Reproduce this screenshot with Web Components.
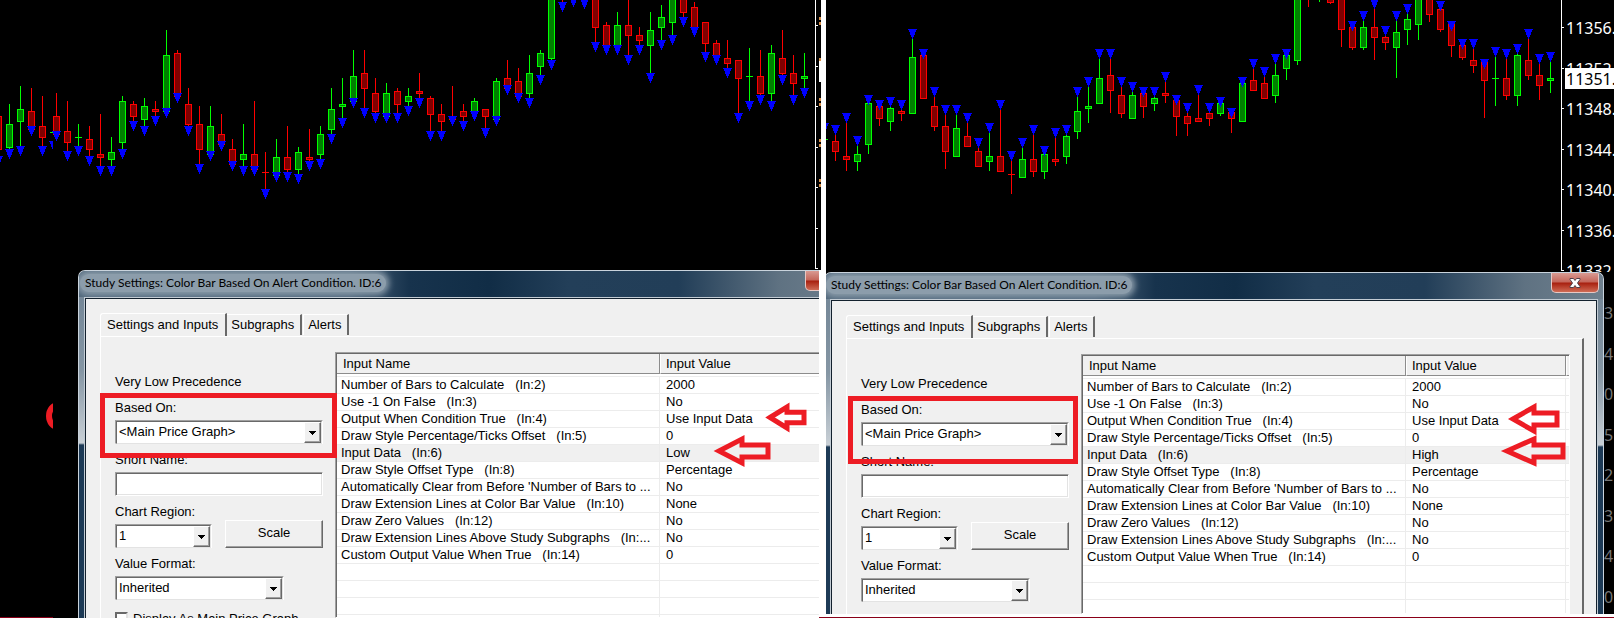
<!DOCTYPE html>
<html lang="en">
<head>
<meta charset="utf-8">
<title>Study Settings comparison</title>
<style>
  html, body { margin: 0; height: 100%; overflow: hidden; background: #fff; }
  body { font: 13px/20px "Liberation Sans", Arial, sans-serif; color: #000; }
</style>
</head>
<body>
<study-compare></study-compare>

<script>
const RED = "#ff0000", GREEN = "#00ff00";

/* One row per bar: x, colour, wick top, body top, body bottom, wick end. */
const LOW_BARS = `
-2 r 116 116 150 156|9 g 104 124 148 149|20 g 86 109 122 146|31 r 88 111 130 126|42 r 96 126 138 146
56 r 93 116 135 131|67 r 101 131 143 151|78 g 124 137 138 146|89 r 126 139 150 156|100 r 114 154 158 166
111 g 137 152 160 166|122 g 96 101 143 149|133 r 101 104 117 121|144 g 98 106 120 126|155 r 101 109 112 116
166 g 30 55 112 108|177 r 50 53 97 93|188 r 88 104 125 126|199 r 106 124 150 164|210 g 106 126 155 151
221 r 114 134 145 141|232 r 139 149 165 161|243 g 124 154 160 166|254 r 101 154 170 166|265 r 152 172 173 189
276 g 139 157 176 172|287 r 126 157 170 172|298 g 147 152 170 174|309 r 129 157 160 161|320 g 126 134 155 159
331 g 88 109 130 134|342 g 78 104 107 118|353 g 50 76 102 98|364 r 50 73 89 108|375 r 78 93 112 113
386 g 83 93 117 113|397 r 88 91 105 113|408 g 88 96 102 106|419 r 73 91 94 98|430 r 96 98 115 131
441 r 104 114 122 131|452 r 86 116 120 116|463 r 104 111 117 121|474 g 98 101 113 111|485 r 109 109 117 128
496 g 78 81 120 116|507 r 60 78 89 85|518 r 68 81 97 93|529 g 55 73 94 98|540 g 50 53 67 75
551 g -10 -10 59 60|562 r -10 -10 -5 2|573 g -30 -30 -20 -3|584 g -30 -30 -20 -1|595 r -10 -10 28 42
606 r 22 25 47 45|617 g 12 25 46 45|628 r -5 25 36 55|639 r 27 35 41 45|650 g 12 30 46 73
661 g 5 17 28 40|672 g -10 -10 23 35|683 r -10 -10 13 17|694 r 2 7 29 27|705 r 22 22 44 52
716 r 40 43 57 55|727 r 40 58 64 68|738 r 60 60 79 113|749 g 48 76 77 101|760 r 50 76 94 95
771 g 45 53 94 101|782 r 30 58 74 75|793 r 55 73 84 95|804 g 53 76 79 88`;

/* Same layout, the third number being the marker's top edge. */
const HIGH_BARS = `
-2 g 123 139 140 140|9 r 125 141 152 161|20 r 113 156 160 171|31 g 136 154 162 171|42 g 95 103 145 154
53 r 100 106 119 126|64 g 97 108 122 131|75 r 100 111 114 121|86 g 29 57 114 114|97 r 49 55 99 99
108 r 87 106 127 131|119 r 105 126 152 169|130 g 105 128 157 157|141 r 113 136 147 147|152 r 138 151 167 167
163 g 123 156 162 171|174 r 100 156 172 172|185 r 151 174 175 194|196 g 138 159 178 178|207 r 125 159 172 177
218 g 146 154 172 179|229 r 128 159 162 166|240 g 125 136 157 164|251 g 87 111 132 139|262 g 77 106 109 123
273 g 49 78 104 104|284 r 49 75 91 113|295 r 77 95 114 118|306 g 82 95 119 119|317 r 87 93 107 118
328 g 87 98 104 111|339 r 72 93 96 103|350 r 95 100 117 136|361 r 103 116 124 136|372 r 85 118 122 122
383 r 103 113 119 126|394 g 97 103 114 116|405 r 108 112 119 133|416 g 77 83 122 122|427 r 59 80 91 91
438 r 67 83 99 99|449 g 54 75 96 103|460 g 49 55 69 80|471 g -20 -10 61 65|482 r -20 -10 -5 7
493 g -20 -10 -5 2|504 r -20 -10 3 4|515 r -20 -10 30 47|526 r 21 27 48 50|537 g 11 27 48 50
548 r -1 27 38 60|559 r 26 37 43 50|570 g 11 32 48 78|581 g 4 19 30 45|592 g -20 -10 25 40
603 r -20 -10 15 22|614 r 1 9 30 32|625 r 21 24 46 57|636 r 39 45 58 60|647 r 39 60 66 73
658 r 59 62 81 118|669 g 47 78 79 106|680 r 49 78 96 100|691 g 44 55 96 106|702 r 29 60 76 80
713 r 54 75 86 100|724 g 52 78 81 93`;

const INPUTS = [
  ["Number of Bars to Calculate   (In:2)", "2000"],
  ["Use -1 On False   (In:3)", "No"],
  ["Output When Condition True   (In:4)", "Use Input Data"],
  ["Draw Style Percentage/Ticks Offset   (In:5)", "0"],
  ["Input Data   (In:6)", ""],
  ["Draw Style Offset Type   (In:8)", "Percentage"],
  ["Automatically Clear from Before 'Number of Bars to ...", "No"],
  ["Draw Extension Lines at Color Bar Value   (In:10)", "None"],
  ["Draw Zero Values   (In:12)", "No"],
  ["Draw Extension Lines Above Study Subgraphs   (In:...", "No"],
  ["Custom Output Value When True   (In:14)", "0"],
];

function define(name, render) {
  customElements.define(name, class extends HTMLElement {
    connectedCallback() {
      if (this.shadowRoot) return;
      this.attachShadow({ mode: "open" }).innerHTML = render(this);
    }
  });
}

const marker = (x, y) =>
  `<path fill="#0000ff" d="M${x - 4} ${y}h9v1h-1v2h-1v3h-1v2h-1v2h-1v-2h-1v-2h-1v-3h-1v-2h-1z"/>`;

function bar(row, mode) {
  const [xs, c, ...n] = row.trim().split(" ");
  const x = +xs, [a, top, bottom, end] = n.map(Number);
  const line = c === "r" ? RED : GREEN, fill = c === "r" ? "#800000" : "#008000";
  const from = mode === "high" ? a + 4 : a;
  const body = bottom - top < 2
    ? `<rect x="${x - 3}" y="${top}" width="7" height="1" fill="${line}"/>`
    : `<rect x="${x - 3}" y="${top}" width="7" height="${bottom - top}" fill="${line}"/>
       <rect x="${x - 2}" y="${top + 1}" width="5" height="${bottom - top - 2}" fill="${fill}"/>`;
  return `<rect x="${x}" y="${from}" width="1" height="${Math.max(0, end - from)}" fill="${line}"/>${body}`
    + marker(x, mode === "high" ? a : end);
}

define("price-bars", el => {
  const mode = el.getAttribute("mode");
  const rows = (mode === "high" ? HIGH_BARS : LOW_BARS).trim().split(/[|\n]/);
  const seam = mode === "low"
    ? `<rect x="50" y="132" width="3" height="1" fill="${GREEN}"/><path fill="#0000ff" d="M49 141h4v8h-1v-2h-1v-3h-1v-2h-1z"/>` : "";
  return `<style>
      :host { display: block; flex: 1; min-width: 0; }
      svg { display: block; width: 100%; height: 100%; }
    </style>
    <svg shape-rendering="crispEdges" aria-label="Price bars with ${mode} markers">${rows.map(r => bar(r, mode)).join("")}${seam}</svg>`;
});

define("price-axis", el => {
  const first = +el.getAttribute("first");
  const labels = (el.getAttribute("labels") || "").split(" ").filter(Boolean);
  const ticks = [0, 41, 81, 122, 162, 203, 243, 284].map(v => v + first);
  const plain = el.hasAttribute("plain");
  const x = plain ? 0 : 5;
  const price = el.getAttribute("price");
  return `<style>
      :host { display: block; overflow: hidden; }
      svg { display: block; width: 100%; height: 100%; }
      text { font: 16px "Noto Sans", sans-serif; }
    </style>
    <svg>
      ${plain ? "" : `<rect width="1" height="${first + 243}" fill="#fff"/>` + ticks.slice(0, 7).map(y => `<rect y="${y}" width="3" height="1" fill="#fff"/>`).join("")}
      ${labels.map((t, i) => `<text x="${x}" y="${ticks[i] + 7}" fill="${plain ? "#777" : "#fff"}">${t}</text>`).join("")}
      ${price ? `<rect x="4" y="68" width="60" height="21" fill="#fff"/><text x="5" y="85" fill="#000">${price}</text>` : ""}
      ${!plain && !labels.length ? ticks.slice(0, 5).map(y => `<path fill="#d8904a" d="M4 ${y - 8}h2v3h-2zM4 ${y - 3}h2v3h-2z"/>`).join("") + `<rect x="4" y="61" width="2" height="21" fill="#fff"/>` : ""}
    </svg>`;
});

define("combo-box", el => `<style>
    :host { display: grid; height: 24px; box-sizing: border-box; background: #fff;
      border: 1px solid; border-color: #a0a0a0 #fff #fff #a0a0a0; width: var(--w, 100%); }
    select, .drop { grid-area: 1 / 1; }
    select { appearance: none; font: inherit; color: inherit; background: #fff; border-radius: 0; margin: 0; min-width: 0;
      padding: 0 18px 1px 2px; border: 1px solid; border-color: #696969 #e3e3e3 #e3e3e3 #696969; outline: 0; }
    .drop { justify-self: end; width: 17px; margin: 1px; box-sizing: border-box; background: #f0f0f0; pointer-events: none;
      border: 1px solid; border-color: #fff #696969 #696969 #fff; box-shadow: inset -1px -1px #a0a0a0;
      display: grid; place-items: center; z-index: 1; }
  </style>
  <select aria-label="${el.getAttribute("label")}"><option>${el.getAttribute("value")}</option></select>
  <span class="drop"><svg width="7" height="4" shape-rendering="crispEdges"><path d="M0 0h7v1h-1v1h-1v1h-1v1h-1v-1h-1v-1h-1v-1h-1z"/></svg></span>`);

define("input-table", el => {
  const rows = INPUTS.map(([name, value], i) =>
    `<tr class="${i === 4 ? "sel" : ""}"><td>${name}</td><td>${value || el.getAttribute("data")}</td><td></td></tr>`);
  for (let i = 0; i < 6; i++) rows.push("<tr><td></td><td></td><td></td></tr>");
  return `<style>
    :host { display: block; background: #fff; border: 1px solid; border-color: #a0a0a0 #fff #fff #a0a0a0; overflow: hidden; }
    .in { border: solid #696969; border-width: 1px 0 0 1px; height: 100%; }
    table { width: 100%; border-collapse: separate; border-spacing: 0; table-layout: fixed; }
    col.name { width: 323px; } col.end { width: 3px; }
    th, td { padding: 0; text-align: left; font-weight: 400; white-space: pre; overflow: hidden; box-sizing: border-box; }
    th { height: 19px; line-height: 18px; background: #f0f0f0; border: solid #8c8c8c; border-width: 0 1px 1px 0; padding: 1px 0 0 6px; }
    th + th { border-left: 1px solid #fff; padding-left: 5px; }
    th:last-child { border-right: 0; padding: 0; }
    td { height: 17px; line-height: 16px; border: solid #ececec; border-width: 1px 1px 0 0; padding-left: 4px; }
    td + td { padding-left: 6px; }
    td:last-child { border-right: 0; padding: 0; }
    .gap td { height: 2px; border-width: 0; }
    .sel td { background: #f0f0f0; }
  </style>
  <div class="in"><table>
    <colgroup><col class="name"><col><col class="end"></colgroup>
    <thead><tr><th>Input Name</th><th>Input Value</th><th></th></tr></thead>
    <tbody><tr class="gap"><td></td><td></td><td></td></tr>${rows.join("")}</tbody>
  </table></div>`;
});

define("study-dialog", el => `<style>
    :host { display: flex; flex-direction: column; box-sizing: border-box; min-width: 780px; overflow: hidden;
      border: 1px solid #c9d3dc; border-bottom: 0; border-radius: 7px 7px 0 0;
      background: linear-gradient(#6f8293, #8596a4 100px, #c9d0d6 172px, #1d3a56 174px); }
    header { display: flex; justify-content: space-between; height: 26px; padding-right: 4px;
      background: linear-gradient(90deg, #50677b, #4b6379 270px, #17334d 330px, #112d46 410px, #233f59 490px, #223e58 600px, #5f7282 700px, #6f808e); }
    h1 { margin: 3px 0 0 1px; padding: 0 5px; font: 12px/18px Lato, sans-serif; color: #000; border-radius: 9px;
      background: #8c9dab; box-shadow: 0 0 6px 3px #8c9dab; height: 18px; }
    .close { width: 48px; height: 20px; padding: 0; border: 1px solid #e8c8c4; border-top: 0; border-radius: 0 0 5px 5px;
      background: linear-gradient(#d99a92, #c4665a 9px, #a8200f 10px, #cf6b55); display: grid; place-items: center; }
    .client { flex: 1; margin: 0 5px; border: 1px solid #c3ccd4; border-bottom: 0; min-height: 0; display: flex; }
    .inner { flex: 1; min-width: 0; border: 1px solid #13212e; border-bottom: 0; background: #f0f0f0; padding: 14px 12px 0 14px;
      display: flex; flex-direction: column; }
    nav { display: flex; align-items: flex-end; height: 23px; }
    nav button { font: inherit; background: #f0f0f0; margin: 0 1px 1px 0; height: 21px; line-height: 20px; border: solid; padding: 0 6px 0 4px;
      border-width: 1px 2px 0 1px; border-color: #fff #696969 #fff #fff; color: inherit; white-space: nowrap; }
    nav button.on { height: 24px; margin: 0 0 -1px; padding: 0 7px 2px 6px; line-height: 18px; border-radius: 3px 0 0 0; }
    nav button.on + button { border-left: 0; }
    .pane { flex: 1; min-height: 0; display: flex; gap: 12px; border: solid; border-width: 1px 2px 0 1px; border-color: #fff #696969 #fff #fff;
      padding: 15px 12px 0 14px; }
    form { width: 208px; padding-top: 20px; flex: none; }
    p { margin: 0 0 6px; }
    label { display: block; }
    .field { display: grid; gap: 2px; margin-bottom: 6px; }
    .two { display: flex; justify-content: space-between; align-items: flex-end; }
    input[type=text] { height: 24px; box-sizing: border-box; width: 100%; border: 1px solid; border-color: #a0a0a0 #fff #fff #a0a0a0;
      box-shadow: inset 1px 1px #696969, inset -1px -1px #e3e3e3; background: #fff; padding: 0 3px; font: inherit; }
    .scale { width: 98px; height: 28px; margin-bottom: 6px; font: inherit; color: inherit; background: #f0f0f0; border: 1px solid; border-color: #fff #696969 #696969 #fff;
      box-shadow: inset -1px -1px #a0a0a0; padding: 0 0 2px; }
    .check { display: flex; gap: 5px; margin-top: 11px; white-space: nowrap; line-height: 16px; }
    .check input { appearance: none; margin: 1px 0 0; width: 13px; height: 13px; background: #fff; border: 2px solid; border-color: #696969 #e3e3e3 #e3e3e3 #696969; border-radius: 0; }
    input-table { flex: 1; min-width: 0; }
  </style>
  <header><h1>Study Settings: Color Bar Based On Alert Condition. ID:6</h1>
    <button class="close" aria-label="Close"><svg width="12" height="10" viewBox="0 0 12 10"><path d="M1 .5h3.500L6 2.500 7.500.5H11v1L8.500 5 11 8.500v1H7.500L6 7.500 4.500 9.500H1v-1L3.500 5 1 1.500z" fill="#fff" stroke="#50404a"/></svg></button>
  </header>
  <div class="client"><div class="inner">
    <nav><button class="on">Settings and Inputs</button><button>Subgraphs</button><button>Alerts</button></nav>
    <div class="pane">
      <form onsubmit="return false">
        <p>Very Low Precedence</p>
        <div class="field"><label>Based On:</label><combo-box label="Based On" value="&amp;lt;Main Price Graph&amp;gt;"></combo-box></div>
        <div class="field"><label for="short">Short Name:</label><input id="short" type="text"></div>
        <div class="two"><div class="field"><label>Chart Region:</label><combo-box style="--w:97px" label="Chart Region" value="1"></combo-box></div>
          <button class="scale" type="button">Scale</button></div>
        <div class="field"><label>Value Format:</label><combo-box style="--w:169px" label="Value Format" value="Inherited"></combo-box></div>
        <label class="check"><input type="checkbox">Display As Main Price Graph</label>
      </form>
      <input-table data="${el.getAttribute("data")}"></input-table>
    </div>
  </div></div>`);

/* Red pen marks drawn over the settings: a frame and two block arrows. */
define("red-marks", el => {
  const arrow = (x, y, w, h, head) => {
    const m = y + h / 2, q = h / 4;
    return `<path d="M${x} ${m}L${x + head} ${y}V${m - q}H${x + w}V${m + q}H${x + head}V${y + h}Z"/>`;
  };
  const left = el.getAttribute("side") === "left";
  return `<style>
      :host { position: absolute; inset: 0; pointer-events: none; }
      svg { width: 100%; height: 100%; fill: none; stroke: #ed1c24; stroke-width: 5; }
      svg svg { width: 53px; overflow: hidden; }
    </style>
    <svg>${left
      ? `<rect x="102.500" y="395.500" width="232" height="60"/>${arrow(770, 407, 34, 21, 17)}${arrow(719, 439, 49, 24, 23)}
         <svg><ellipse cx="58" cy="416" rx="9" ry="11" stroke-width="6"/></svg>`
      : `<rect x="24.500" y="398.500" width="225" height="63"/>${arrow(687, 407, 44, 24, 21)}${arrow(681, 439, 56, 24, 27)}`}</svg>`;
});

define("study-compare", () => `<style>
    :host { display: grid; grid-template-columns: minmax(0, 826fr) minmax(0, 788fr); height: 100vh; box-sizing: border-box; background: #fff; }
    section { position: relative; display: flex; flex-direction: column; overflow: hidden; min-height: 0; }
    .left { background: linear-gradient(#000, #000) 0 0 / calc(100% - 5px) 270px no-repeat, linear-gradient(#000, #000) 0 0 / 400px 100% no-repeat #fff; }
    .right { background: #000; border-bottom: 3px solid #fff; margin-bottom: 1px; }
    .chart { display: flex; overflow: hidden; flex: none; }
    .left .chart { height: 270px; margin-right: 5px; }
    .right .chart { height: 272px; }
    .left price-axis { width: 6px; }
    .right price-axis { width: 53px; }
    .desk { flex: 1; min-height: 0; display: flex; overflow: hidden; }
    .left .desk { margin: 0 7px 0 78px; }
    .right .desk { margin-left: -2px; }
    study-dialog { flex: 1; }
    .right .desk price-axis { width: 10px; }
    hr { position: absolute; bottom: 0; left: 0; right: 0; height: 1px; margin: 0; border: 0;
      background: linear-gradient(90deg, #8a0018 53px, transparent 53px, transparent calc(100% - 795px), #8a0018 calc(100% - 795px)); }
  </style>
  <section class="left">
    <div class="chart"><price-bars mode="low"></price-bars><price-axis first="25"></price-axis></div>
    <div class="desk"><study-dialog data="Low"></study-dialog></div>
    <red-marks side="left"></red-marks>
  </section>
  <section class="right">
    <div class="chart"><price-bars mode="high"></price-bars>
      <price-axis first="27" labels="11356.0 11352.0 11348.0 11344.0 11340.0 11336.0 11332.0" price="11351.0"></price-axis></div>
    <div class="desk"><study-dialog data="High"></study-dialog><price-axis plain first="40" labels="3 4 0 5 2 3 4 0"></price-axis></div>
    <red-marks side="right"></red-marks>
  </section>
  <hr>`);
</script>
</body>
</html>
